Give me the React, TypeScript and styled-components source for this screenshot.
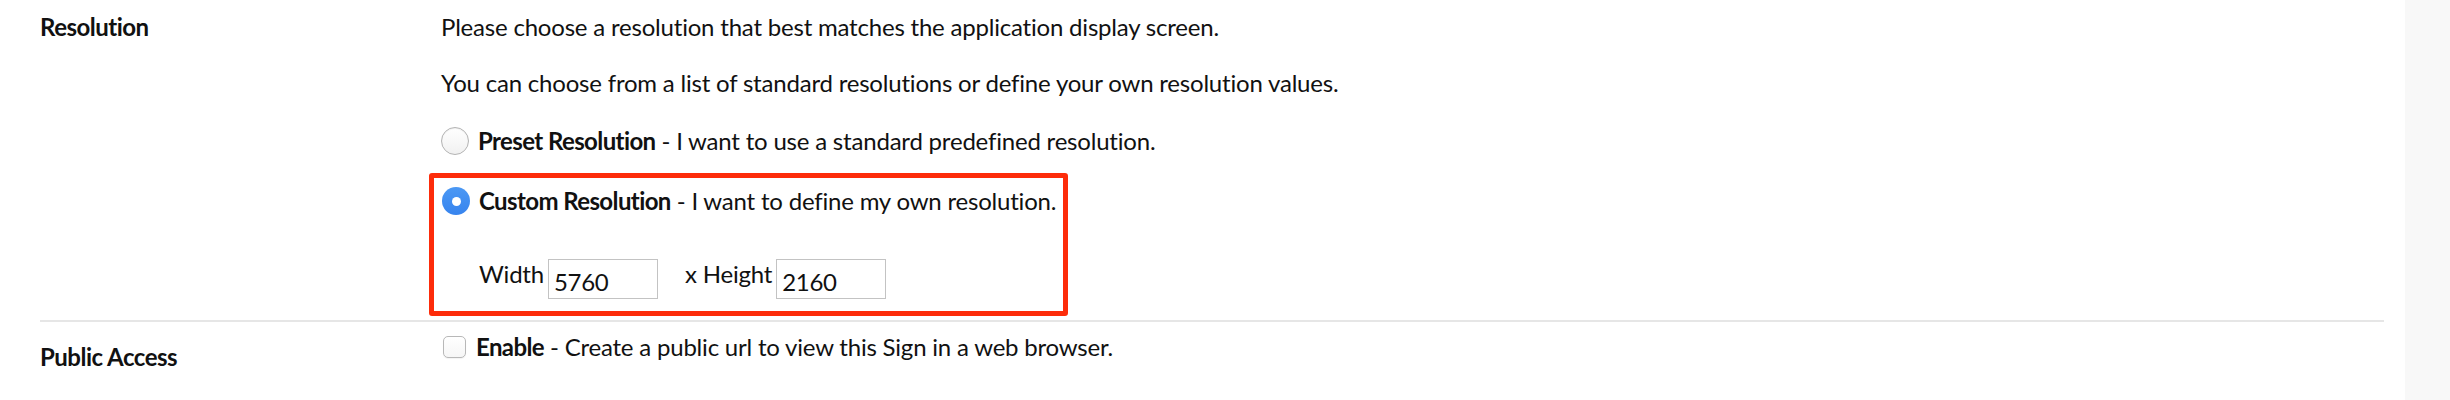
import React from "react";
import styled, { createGlobalStyle } from "styled-components";

const Global = createGlobalStyle`
  html, body { margin: 0; padding: 0; }
  body {
    background: #f8f8f8;
    font-family: Lato, "Liberation Sans", sans-serif;
    letter-spacing: -0.2px;
    color: #111;
  }
`;

const Page = styled.div`
  box-sizing: border-box;
  width: 2405px;
  height: 400px;
  background: #fff;
  padding: 0 21px 0 40px;
`;

const Section = styled.section<{ $pad: string; $divider?: boolean }>`
  display: grid;
  grid-template-columns: 401px 1fr;
  align-items: start;
  padding: ${(p) => p.$pad};
  border-bottom: ${(p) => (p.$divider ? "2px solid #e6e6e6" : "none")};
`;

const Label = styled.div<{ $offset?: number }>`
  font-weight: 700;
  font-size: 24px;
  line-height: 36px;
  letter-spacing: -0.5px;
  margin-top: ${(p) => p.$offset ?? 0}px;
`;

const Content = styled.div`
  display: flex;
  flex-direction: column;
  align-items: flex-start;
`;

const Para = styled.p<{ $gap?: number }>`
  margin: ${(p) => p.$gap ?? 0}px 0 0;
  font-size: 24px;
  line-height: 36px;
  white-space: nowrap;
`;

const Option = styled.label<{ $gap?: number }>`
  display: flex;
  align-items: center;
  gap: 9px;
  margin-top: ${(p) => p.$gap ?? 0}px;
  font-size: 24px;
  line-height: 36px;
  white-space: nowrap;
`;

const Radio = styled.span<{ $checked?: boolean }>`
  box-sizing: border-box;
  width: 28px;
  height: 28px;
  border-radius: 50%;
  flex: none;
  display: flex;
  align-items: center;
  justify-content: center;
  border: ${(p) => (p.$checked ? "none" : "1px solid #b3b3b3")};
  background: ${(p) =>
    p.$checked
      ? "linear-gradient(#4b98f4, #3784ee)"
      : "linear-gradient(#ffffff, #f1f1f1)"};
  box-shadow: ${(p) =>
    p.$checked ? "none" : "inset 0 1px 1px rgba(0,0,0,0.06)"};
  &::after {
    content: "";
    display: ${(p) => (p.$checked ? "block" : "none")};
    width: 9px;
    height: 9px;
    border-radius: 50%;
    background: #fff;
  }
`;

const Check = styled.span`
  box-sizing: border-box;
  width: 23px;
  height: 22px;
  margin-left: 2px;
  margin-right: 1px;
  flex: none;
  border: 1px solid #b8b8b8;
  border-radius: 5px;
  background: linear-gradient(#ffffff, #f6f6f6);
  box-shadow: 0 1px 1px rgba(0, 0, 0, 0.05);
`;

const Strong = styled.b`
  font-weight: 700;
  letter-spacing: -0.6px;
`;

const Highlight = styled.div`
  box-sizing: border-box;
  width: 639px;
  margin: 14px 0 0 -12px;
  padding: 5px 0 12px 8px;
  border: 5px solid #fd2c0a;
  border-radius: 3px;
`;

const DimRow = styled.div`
  display: flex;
  align-items: flex-start;
  margin: 37px 0 0 37px;
  font-size: 24px;
  line-height: 36px;
`;

const DimLabel = styled.span<{ $lead?: number }>`
  margin-left: ${(p) => p.$lead ?? 0}px;
  margin-right: 4px;
`;

const Field = styled.input`
  box-sizing: border-box;
  width: 110px;
  height: 40px;
  margin-top: 3px;
  padding: 4px 5px 0;
  border: 1px solid #c3c3c3;
  border-radius: 0;
  font-family: inherit;
  font-size: 24px;
  letter-spacing: -0.3px;
  color: #111;
  background: #fff;
  outline: none;
`;

export default function App() {
  return (
    <>
      <Global />
      <Page>
        <Section $pad="9px 0 4px" $divider>
          <Label>Resolution</Label>
          <Content>
            <Para>
              Please choose a resolution that best matches the application
              display screen.
            </Para>
            <Para $gap={20}>
              You can choose from a list of standard resolutions or define your
              own resolution values.
            </Para>
            <Option $gap={22}>
              <Radio />
              <span>
                <Strong>Preset Resolution</Strong> - I want to use a standard
                predefined resolution.
              </span>
            </Option>
            <Highlight>
              <Option>
                <Radio $checked />
                <span>
                  <Strong>Custom Resolution</Strong> - I want to define my own
                  resolution.
                </span>
              </Option>
              <DimRow>
                <DimLabel>Width</DimLabel>
                <Field defaultValue="5760" />
                <DimLabel $lead={27}>x Height</DimLabel>
                <Field defaultValue="2160" />
              </DimRow>
            </Highlight>
          </Content>
        </Section>
        <Section $pad="7px 0 0">
          <Label $offset={10}>Public Access</Label>
          <Content>
            <Option>
              <Check />
              <span>
                <Strong>Enable</Strong> - Create a public url to view this Sign
                in a web browser.
              </span>
            </Option>
          </Content>
        </Section>
      </Page>
    </>
  );
}
